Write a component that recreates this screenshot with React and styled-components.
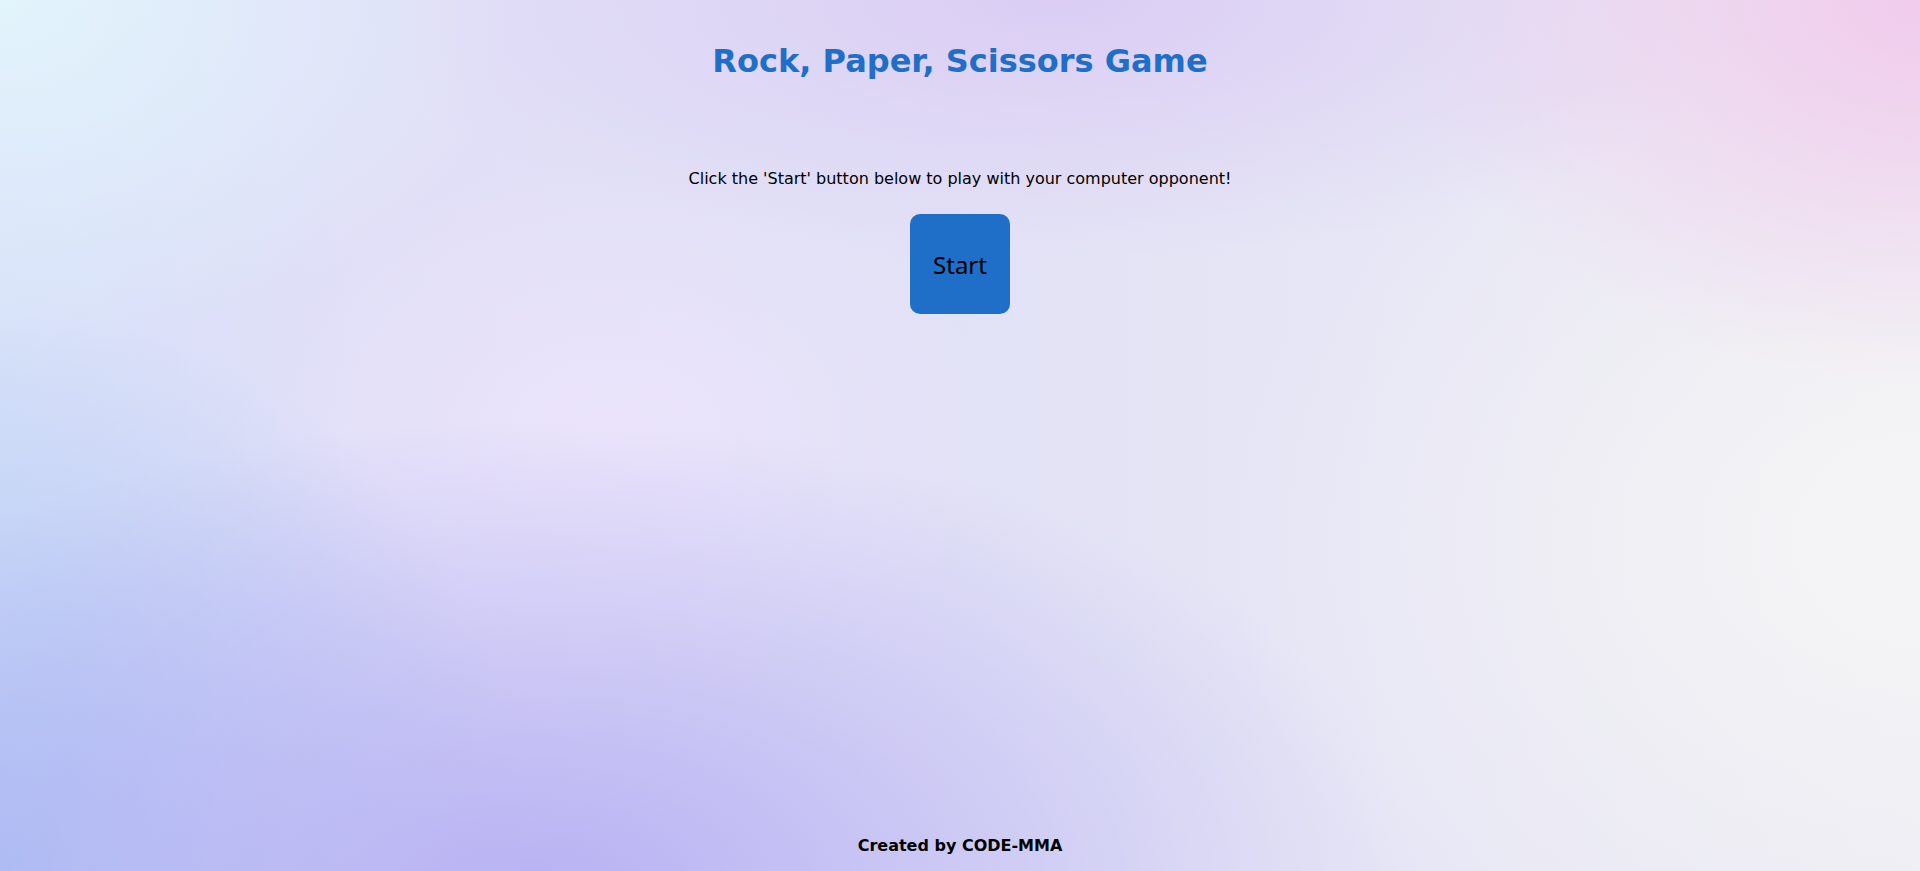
import React from "react";
import styled, { createGlobalStyle } from "styled-components";

const GlobalStyle = createGlobalStyle`
  html, body {
    margin: 0;
    padding: 0;
    height: 100%;
  }
  body {
    font-family: "DejaVu Sans", Verdana, sans-serif;
    color: #000;
  }
`;

const Page = styled.div`
  min-height: 100vh;
  box-sizing: border-box;
  display: flex;
  flex-direction: column;
  align-items: center;
  background-color: #e3e1f6;
  background-image:
    radial-gradient(ellipse 520px 360px at 0% 0%, rgba(226, 245, 252, 0.95), rgba(226, 245, 252, 0) 100%),
    radial-gradient(ellipse 520px 380px at 100% 0%, rgba(241, 203, 236, 1), rgba(241, 203, 236, 0) 100%),
    radial-gradient(ellipse 700px 520px at 100% 62%, rgba(245, 244, 245, 1), rgba(245, 244, 245, 0) 100%),
    radial-gradient(ellipse 880px 470px at 28% 102%, rgba(184, 178, 243, 1), rgba(184, 178, 243, 0) 100%),
    radial-gradient(ellipse 540px 560px at 0% 100%, rgba(168, 193, 244, 1), rgba(168, 193, 244, 0) 100%),
    radial-gradient(ellipse 360px 620px at 0% 45%, rgba(214, 226, 249, 0.9), rgba(214, 226, 249, 0) 100%),
    radial-gradient(ellipse 380px 280px at 32% 50%, rgba(236, 228, 252, 0.9), rgba(236, 228, 252, 0) 100%),
    radial-gradient(ellipse 700px 260px at 55% 0%, rgba(219, 205, 244, 1), rgba(219, 205, 244, 0) 100%),
    linear-gradient(90deg, #e0ddf8 0%, #e2e2f6 50%, #ecebf4 100%);
`;

const Title = styled.h1`
  margin: 43px 0 0;
  font-family: "DejaVu Sans", Verdana, sans-serif;
  font-size: 32px;
  font-weight: bold;
  line-height: 37px;
  color: #1f6fc8;
  text-align: center;
`;

const Intro = styled.p`
  margin: 89px 0 0;
  font-size: 16px;
  line-height: 19px;
  text-align: center;
`;

const StartButton = styled.button`
  margin-top: 26px;
  width: 100px;
  height: 100px;
  border: none;
  border-radius: 10px;
  background: #1f6fc8;
  color: #000;
  font-family: "Noto Sans", "Open Sans", sans-serif;
  font-size: 24px;
  cursor: pointer;
  padding: 0;
`;

const Footer = styled.footer`
  margin-top: auto;
  padding-bottom: 16px;
  font-size: 16px;
  font-weight: bold;
  line-height: 19px;
  text-align: center;
`;

export default function App() {
  return (
    <>
      <GlobalStyle />
      <Page>
        <Title>Rock, Paper, Scissors Game</Title>
        <Intro>Click the 'Start' button below to play with your computer opponent!</Intro>
        <StartButton type="button">Start</StartButton>
        <Footer>Created by CODE-MMA</Footer>
      </Page>
    </>
  );
}
